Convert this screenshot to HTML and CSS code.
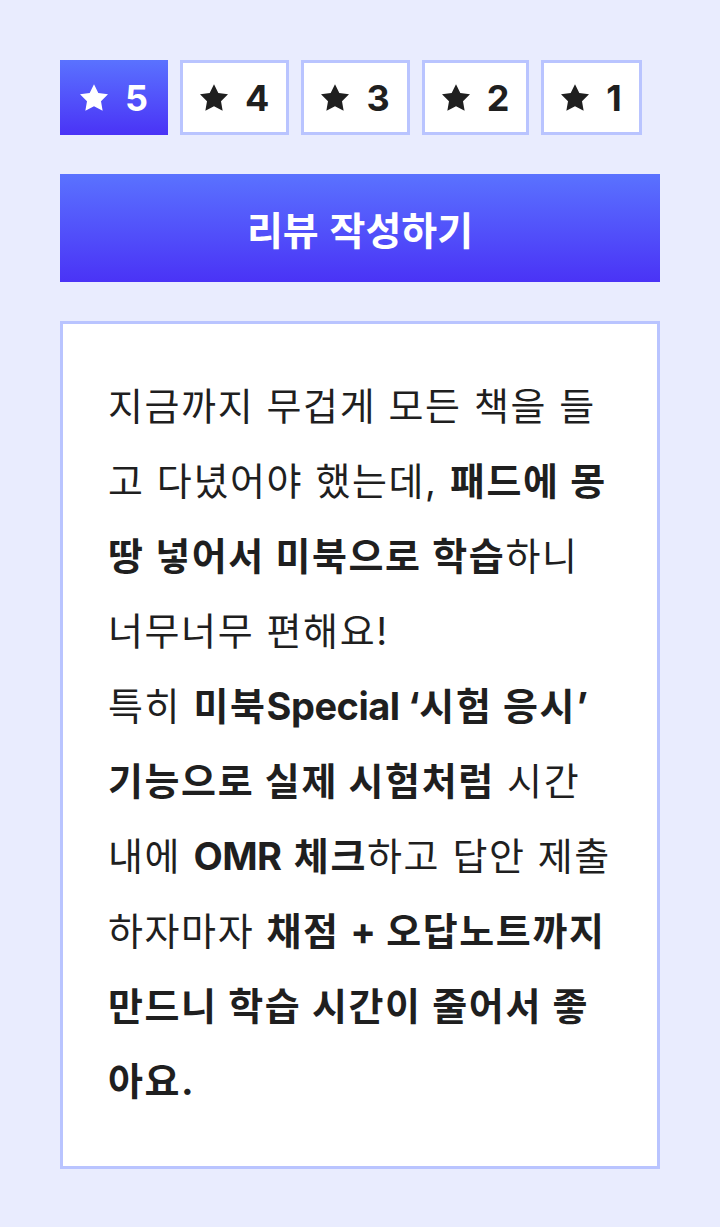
FILE: index.html
```html
<!DOCTYPE html>
<html lang="ko">
<head>
<meta charset="utf-8">
<link rel="stylesheet" href="styles.css">
</head>
<body>
<main class="page">
  <div class="rating-row">
    <button class="rate is-active"><svg class="star" viewBox="2 2 20 19.02"><polygon points="12,2 15.09,8.26 22,9.27 17,14.14 18.18,21.02 12,17.77 5.82,21.02 7,14.14 2,9.27 8.91,8.26"/></svg><span class="num">5</span></button>
    <button class="rate"><svg class="star" viewBox="2 2 20 19.02"><polygon points="12,2 15.09,8.26 22,9.27 17,14.14 18.18,21.02 12,17.77 5.82,21.02 7,14.14 2,9.27 8.91,8.26"/></svg><span class="num">4</span></button>
    <button class="rate"><svg class="star" viewBox="2 2 20 19.02"><polygon points="12,2 15.09,8.26 22,9.27 17,14.14 18.18,21.02 12,17.77 5.82,21.02 7,14.14 2,9.27 8.91,8.26"/></svg><span class="num">3</span></button>
    <button class="rate"><svg class="star" viewBox="2 2 20 19.02"><polygon points="12,2 15.09,8.26 22,9.27 17,14.14 18.18,21.02 12,17.77 5.82,21.02 7,14.14 2,9.27 8.91,8.26"/></svg><span class="num">2</span></button>
    <button class="rate"><svg class="star" viewBox="2 2 20 19.02"><polygon points="12,2 15.09,8.26 22,9.27 17,14.14 18.18,21.02 12,17.77 5.82,21.02 7,14.14 2,9.27 8.91,8.26"/></svg><span class="num">1</span></button>
  </div>
  <button class="write-btn">리뷰 작성하기</button>
  <section class="review">
    <p class="review-text">지금까지 무겁게 모든 책을 들고 다녔어야 했는데, <b>패드에 몽땅 넣어서 미북으로 학습</b>하니 너무너무 편해요!<br>특히 <b>미북<span class="en">Special ‘</span>시험 응시<span class="en">’</span> 기능으로 실제 시험처럼</b> 시간 내에 <b class="en">OMR</b> <b>체크</b>하고 답안 제출하자마자 <b>채점 <span class="en">+</span> 오답노트까지 만드니 학습 시간이 줄어서 좋아요.</b></p>
  </section>
</main>
</body>
</html>
```

FILE: styles.css
```css
* { box-sizing: border-box; }
html, body { margin: 0; padding: 0; }
body {
  background: #e9ecfe;
  font-family: Inter, "Noto Sans CJK KR", sans-serif;
  color: #1f1f1f;
  width: 720px;
  height: 1227px;
  overflow: hidden;
}
.page {
  padding: 60px 60px 0 60px;
  display: flex;
  flex-direction: column;
}
.rating-row {
  display: flex;
  gap: 12px;
}
.rate {
  height: 75px;
  padding: 0 17px;
  border: 3px solid #b9c4ff;
  background: #ffffff;
  display: inline-flex;
  align-items: center;
  justify-content: center;
  gap: 17px;
  font-family: Inter, "Noto Sans CJK KR", sans-serif;
  font-weight: 700;
  font-size: 36px;
  color: #1f1f1f;
  cursor: pointer;
}
.rate .star {
  width: 28px;
  height: 27px;
  fill: #1f1f1f;
  flex: none;
}
.rate .num { line-height: 1; }
.rate.is-active {
  border-color: transparent;
  background: linear-gradient(180deg, #5a72ff 0%, #4a33f6 100%) border-box;
  color: #ffffff;
}
.rate.is-active .star { fill: #ffffff; }
.write-btn {
  margin-top: 39px;
  height: 108px;
  width: 600px;
  border: 0;
  background: linear-gradient(180deg, #5a72ff 0%, #4a33f6 100%);
  color: #ffffff;
  font-family: "Noto Sans CJK KR", sans-serif;
  font-weight: 700;
  font-size: 39px;
  cursor: pointer;
}
.review {
  margin-top: 39px;
  width: 600px;
  background: #ffffff;
  border: 3px solid #b9c4ff;
  padding: 45px 45px 47px 45px;
}
.review-text {
  margin: 0;
  font-family: Inter, "Noto Sans CJK KR", sans-serif;
  font-size: 38px;
  letter-spacing: 1.6px;
  line-height: 75px;
  font-weight: 400;
  color: #1f1f1f;
}
.review-text b { font-weight: 700; }
.review-text .en { letter-spacing: -0.5px; }
```
